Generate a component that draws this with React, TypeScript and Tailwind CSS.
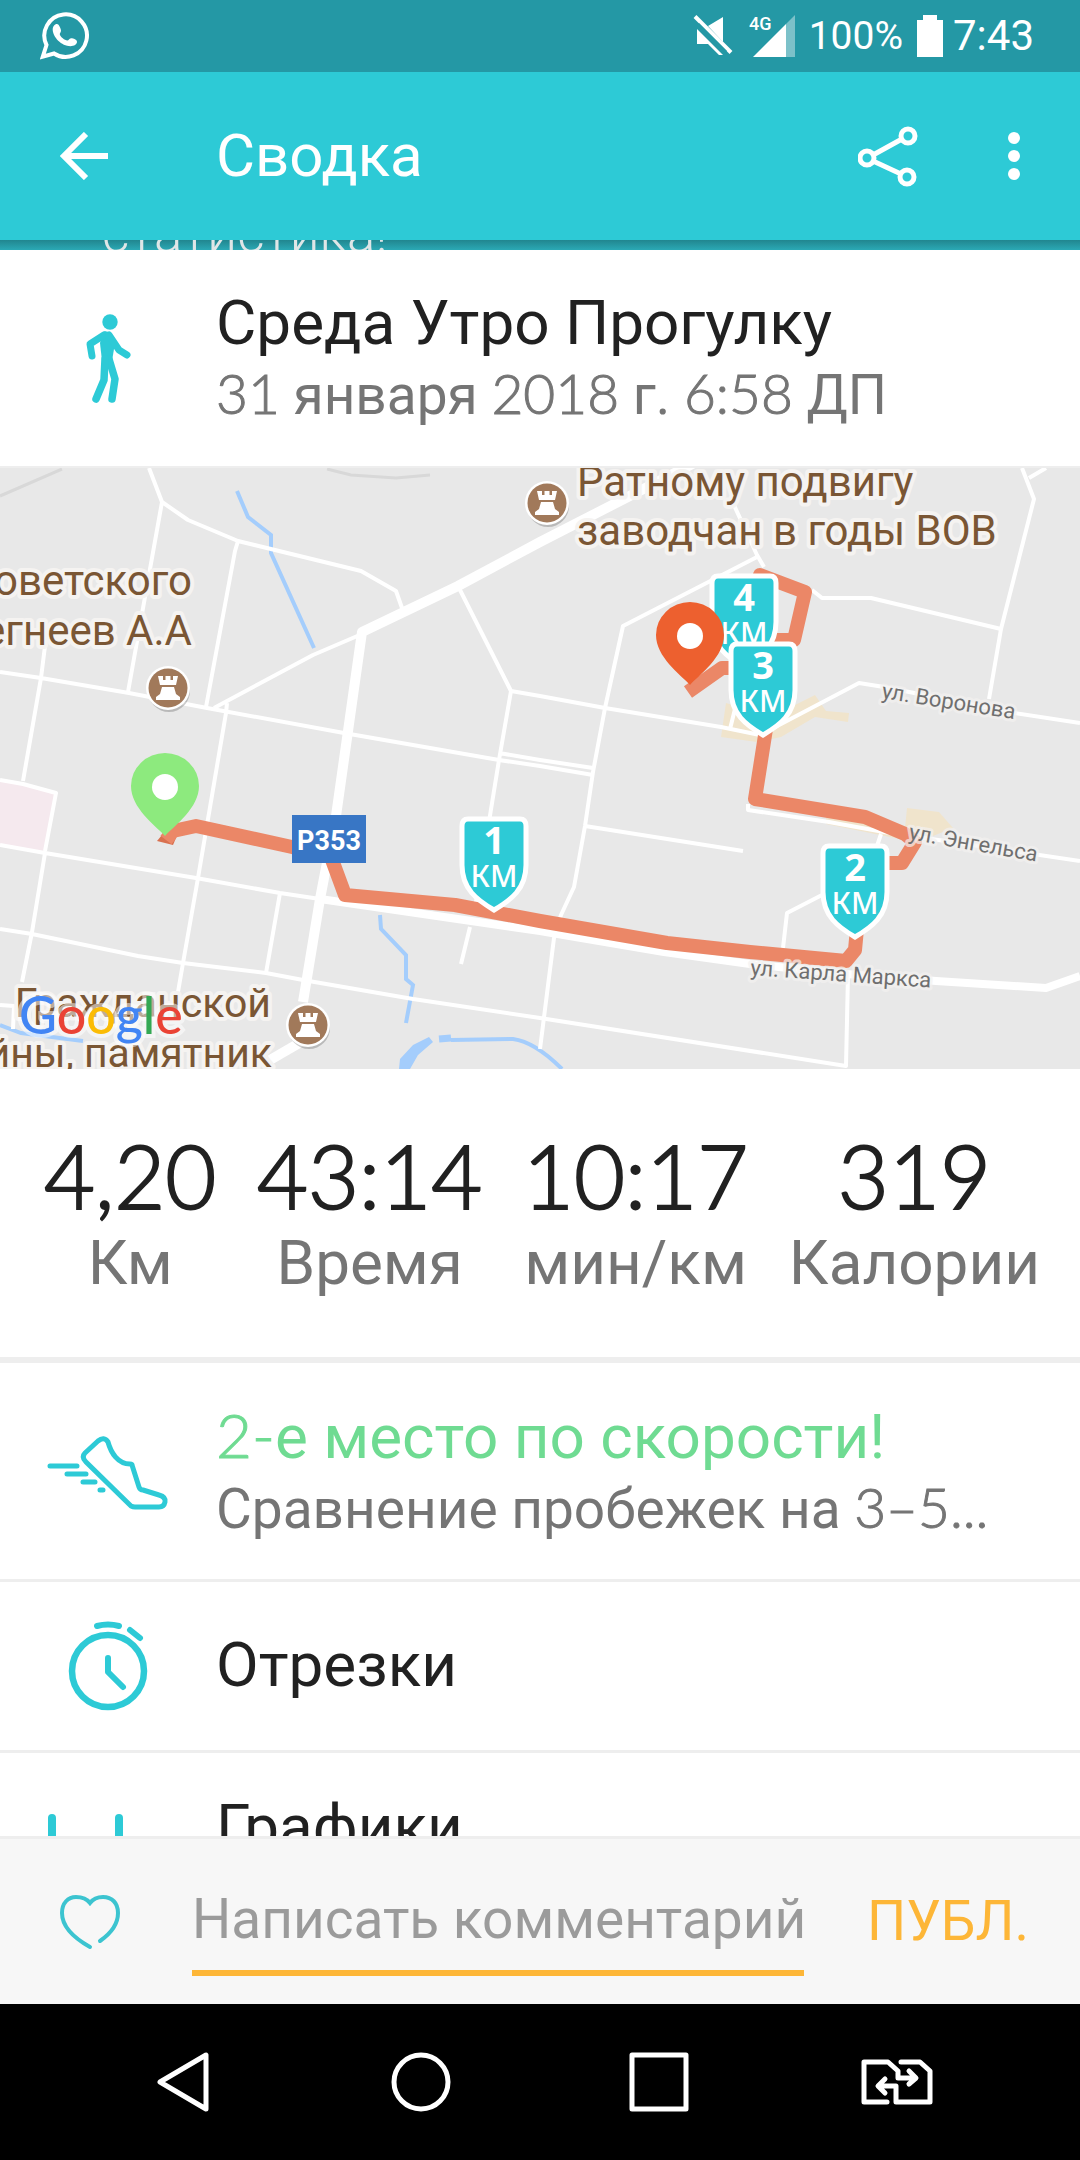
import type { ReactNode } from "react";

const TEAL = "#2dcad6";

function WhatsAppIcon() {
  return (
    <svg viewBox="0 0 50 50" className="h-[50px] w-[50px]" fill="none" aria-hidden="true">
      <path d="M6.500 34A21.300 21.300 0 1 1 14 42.500L2.800 45.600Z" stroke="#fff" strokeWidth="4" strokeLinejoin="miter" />
      <path
        d="M12.700 18.500C12.700 15.500 14.500 13 17 13C18.600 13 20.600 16.500 21 19.500C21 21.400 19.600 22.200 19.800 23.400C20.600 26 24.500 29 27.400 29.600C28.800 29.600 29 27.400 31 27.200C33.600 27.200 37 28.600 37 30.800C37 33.400 34 35.200 30.500 35.200C21.500 35.200 12.700 26 12.700 18.500Z"
        fill="#fff"
      />
    </svg>
  );
}

function MuteIcon() {
  return (
    <svg viewBox="0 0 40 44" className="h-11 w-10" aria-hidden="true">
      <path d="M15 12L30 3V28ZM4 15L30 41H26L15 30H4Z" fill="#fff" />
      <path d="M2 2.500L38 38.500" stroke="#fff" strokeWidth="4" />
      <path d="M5 10L33 38" stroke="#2498a5" strokeWidth="3" />
    </svg>
  );
}

function SignalIcon() {
  return (
    <svg viewBox="0 0 48 44" className="h-11 w-12" aria-hidden="true">
      <path d="M46 1V43H37V10Z" fill="#7cc1c9" />
      <path d="M4 43L37 10V43Z" fill="#fff" />
      <text x="0" y="16" fontSize="18" fontWeight="500" fill="#fff" fontFamily="Roboto, sans-serif">
        4G
      </text>
    </svg>
  );
}

function BatteryIcon() {
  return (
    <svg viewBox="0 0 26 42" className="h-[42px] w-[26px]" aria-hidden="true">
      <path d="M6 0H20V5H26V42H0V5H6Z" fill="#fff" />
    </svg>
  );
}

function WalkIcon() {
  return (
    <svg viewBox="-1 -1 48 92" className="h-[92px] w-12" fill="none" stroke={TEAL} strokeLinecap="round" strokeLinejoin="round" aria-hidden="true">
      <circle cx="25" cy="9" r="7.700" fill={TEAL} stroke="none" />
      <path d="M18 19Q22 17 26 21L30 30L27 48L17 48L15 30Z" fill={TEAL} stroke="none" />
      <path d="M19 22L5 31L7 43" strokeWidth="7" />
      <path d="M24 22L34 37L42 42" strokeWidth="7" />
      <path d="M24 46L30 66L27 86" strokeWidth="7.500" />
      <path d="M20 46L19 67L11 86" strokeWidth="7.500" />
    </svg>
  );
}

function ShoeIcon() {
  return (
    <svg viewBox="0 -5 122 81" className="h-[81px] w-[122px]" fill="none" stroke={TEAL} strokeWidth="5" strokeLinecap="round" strokeLinejoin="round" aria-hidden="true">
      <path d="M3 30H30M20 38H39M36 46H48M53 54H56" />
      <path d="M84 70L39 26Q34 21 38 17L51 5Q57 0 61 6C64 17 71 28 83 28C84 28 85 28 85 29L92 51Q93 54 96 54L112 59Q119 61 118 66Q117 71 112 71H88Q86 71 84 70Z" />
    </svg>
  );
}

function StopwatchIcon() {
  return (
    <svg viewBox="0 0 80 92" className="h-[92px] w-20" fill="none" stroke={TEAL} strokeLinecap="round" strokeLinejoin="round" aria-hidden="true">
      <circle cx="40" cy="51" r="36" strokeWidth="6.500" />
      <path d="M29 6Q40 3 51 6M62 10L72 18" strokeWidth="6" />
      <path d="M40 38V52L55 67" strokeWidth="6" />
    </svg>
  );
}

function ChartIcon() {
  return (
    <svg viewBox="0 0 122 60" className="h-[60px] w-[122px]" fill="none" stroke={TEAL} strokeWidth="8" strokeLinecap="round" aria-hidden="true">
      <path d="M5 20V60M72 20V60M28 43V60M95 43V60" />
    </svg>
  );
}

/* Map ------------------------------------------------------------------ */

function Shield({ x, y, n }: { x: number; y: number; n: string }) {
  return (
    <g transform={`translate(${x} ${y})`}>
      <path
        d="M-26 2H26Q32 2 32 9V48C32 72 17 83 0 93C-17 83 -32 72 -32 48V9Q-32 2 -26 2Z"
        fill={TEAL}
        stroke="#fff"
        strokeWidth="5"
      />
      <text x="0" y="37" textAnchor="middle" fontSize="38" fontWeight="700" fill="#fff" fontFamily="'Noto Sans', sans-serif">
        {n}
      </text>
      <text x="0" y="70" textAnchor="middle" fontSize="30" fontWeight="500" fill="#fff" fontFamily="'Noto Sans', sans-serif">
        КМ
      </text>
    </g>
  );
}

function Pin({ x, y, color }: { x: number; y: number; color: string }) {
  return (
    <g transform={`translate(${x} ${y})`}>
      <path d="M0 0C-10 -11 -34 -28 -34 -50A34 33 0 0 1 34 -50C34 -28 10 -11 0 0Z" fill={color} />
      <circle cx="0" cy="-49" r="13" fill="#fff" />
    </g>
  );
}

function Monument({ x, y }: { x: number; y: number }) {
  return (
    <g transform={`translate(${x} ${y})`}>
      <circle cx="1" cy="3" r="21" fill="#000" opacity="0.200" />
      <circle r="22" fill="#fff" />
      <circle r="19.500" fill="#a1795a" />
      <path d="M-10 -12H-5V-8H-2.500V-12H2.500V-8H5V-12H10L8 -3H-8ZM-6 -1H6L8 6L12 9V12H-12V9L-8 6Z" fill="#fff" />
    </g>
  );
}

const poiLabels = [
  { x: 192, y: 127, size: 42, anchor: "end", text: "Советского" },
  { x: 192, y: 177, size: 42, anchor: "end", text: "Дегнеев А.А" },
  { x: 271, y: 549, size: 41, anchor: "end", text: "Гражданской" },
  { x: 272, y: 599, size: 41, anchor: "end", text: "Войны, памятник" },
  { x: 577, y: 28, size: 42, anchor: "start", text: "Ратному подвигу" },
  { x: 577, y: 77, size: 42, anchor: "start", text: "заводчан в годы ВОВ" },
] as const;

const streetLabels = [
  { x: 881, y: 230, angle: 9, text: "ул. Воронова" },
  { x: 908, y: 371, angle: 10, text: "ул. Энгельса" },
  { x: 750, y: 507, angle: 4, text: "ул. Карла Маркса" },
];

const logoLetters = [
  ["G", "#4285f4"],
  ["o", "#ea4335"],
  ["o", "#fbbc05"],
  ["g", "#4285f4"],
  ["l", "#34a853"],
  ["e", "#ea4335"],
];

function RouteMap() {
  return (
    <svg viewBox="0 0 1080 601" className="block w-full bg-[#e8e8e8]" role="img" aria-label="Маршрут прогулки" fontFamily="Roboto, sans-serif">
      <path d="M0 312L23 316L56 325L45 383L0 377Z" fill="#f5e9ee" />
      <path d="M726 235L721 269L757 274L781 269L815 249L848 254L849 245L826 243L815 227L795 237L760 245ZM907 340L939 344L953 360L933 368L905 360ZM826 348L900 356L905 372L826 356Z" fill="#f0e4cc" />
      <g fill="none" stroke="#d8d8d8" strokeWidth="3">
        <path d="M0 28L62 1M327 1L351 7L396 10L430 7" />
      </g>
      <g fill="none" stroke="#a4cdfc" strokeWidth="4">
        <path d="M237 23L248 49L271 67V85L314 180M380 447L381 461L406 487V511L413 517L406 555M451 572L513 571Q535 574 562 601M0 557L21 565L83 573" />
        <path d="M439 571L451 570" strokeWidth="7" />
      </g>
      <path d="M399 601L400 591L413 577L429 569L433 574L418 587L410 601Z" fill="#a4cdfc" />
      <g fill="none" stroke="#fff" strokeWidth="4" strokeLinejoin="round">
        <path d="M149 0L162 34L188 52L238 73L361 103L396 123L402 140M162 34L128 224M238 73L235 83L206 239" />
        <path d="M0 204L41 210L129 225L207 240L344 265L499 292L540 298L593 307M45 178L41 210L23 313M0 312L23 316L56 325L45 383" />
        <path d="M0 377L45 385L196 410L280 425L320 431M45 385L32 464L22 514M0 461L32 466L138 488L183 495L266 505L303 512L413 531L540 550L846 598L848 506" />
        <path d="M227 235L226 245L198 410L183 495L178 524M280 425L266 505M362 166L313 187L214 240M458 118L511 223L540 228L605 240L721 259L760 267" />
        <path d="M511 223L499 292L475 440M470 459L461 496M499 285L540 292L593 300M0 537L14 538L13 561" />
        <path d="M1022 0L1034 31L1001 161L989 231M1029 10L1046 0M733 35L757 87L764 99M757 89L623 158L605 240L593 304L585 358L574 419L561 447L554 470L540 581" />
        <path d="M812 122L822 130H871L1001 161M760 267L859 215L884 219L1015 245L1080 255M736 237L730 261M585 358L743 383M748 336V342L829 354L884 364L1080 393M881 366L877 378M822 427L787 445L783 480" />
      </g>
      <g fill="none" stroke="#fff" strokeLinejoin="round">
        <path d="M700 -8L540 74L458 118L362 164L336 348L320 431L303 534" strokeWidth="10" />
        <path d="M308 570L270 592" strokeWidth="10" />
        <path d="M320 431L540 463L664 484L750 496L846 506L936 513L1046 520L1080 508" strokeWidth="8" />
      </g>
      <path d="M157 373L173 377L176 370L162 367Z" fill="#d9704f" />
      <g fill="none" stroke="#eb8767" strokeWidth="14" strokeLinejoin="round">
        <path d="M166 372L173 363L196 358L292 379L331 389L345 427L455 437L540 453L667 475L750 484L846 493L855 482L858 450" />
        <path d="M880 395L902 395L915 374L905 366L865 349L755 331L766 261L785 178L794 172L805 124L760 107L750 172L795 172" />
        <path d="M760 200L722 200L688 224" />
      </g>
      <g fill="#6f6f6f" stroke="#f3f1f0" strokeOpacity="0.700" strokeWidth="6" strokeLinejoin="round" paintOrder="stroke" fontSize="22">
        {streetLabels.map((s) => (
          <text key={s.text} transform={`translate(${s.x} ${s.y}) rotate(${s.angle})`}>
            {s.text}
          </text>
        ))}
      </g>
      <g fill="#7a5634" stroke="#f5f3f1" strokeWidth="8" strokeLinejoin="round" paintOrder="stroke">
        {poiLabels.map((p) => (
          <text key={p.text} x={p.x} y={p.y} fontSize={p.size} textAnchor={p.anchor}>
            {p.text}
          </text>
        ))}
      </g>
      <Monument x={168} y={220} />
      <Monument x={308} y={557} />
      <Monument x={547} y={35} />
      <rect x="292" y="347" width="74" height="48" fill="#3876c5" />
      <text x="329" y="382" textAnchor="middle" fontSize="27" fontWeight="700" fill="#fff">
        Р353
      </text>
      <Pin x={165} y={368} color="#8dea7e" />
      <Shield x={744} y={106} n="4" />
      <Pin x={690} y={217} color="#ed602f" />
      <Shield x={763} y={174} n="3" />
      <Shield x={855} y={376} n="2" />
      <Shield x={494} y={349} n="1" />
      <text x="19" y="566" fontSize="52" fontFamily="Lato, sans-serif" fontWeight="500" stroke="#fff" strokeOpacity="0.500" strokeWidth="8" paintOrder="stroke">
        {logoLetters.map(([ch, color], i) => (
          <tspan key={i} fill={color}>
            {ch}
          </tspan>
        ))}
      </text>
    </svg>
  );
}

/* Page pieces ---------------------------------------------------------- */

function Num({ children }: { children: ReactNode }) {
  return <span className="font-[Lato,sans-serif] font-light [-webkit-text-stroke:1px_currentColor]">{children}</span>;
}

function Stat({ value, label }: { value: string; label: string }) {
  return (
    <div className="flex flex-col items-center">
      <dd className="order-first font-[Lato,sans-serif] text-[88px] leading-[88px] font-light text-[#212121] [-webkit-text-stroke:2px_currentColor]">
        {value}
      </dd>
      <dt className="mt-2 text-[62px] leading-[72px] text-[#757575]">{label}</dt>
    </div>
  );
}

function Row({ icon, className, children }: { icon: ReactNode; className: string; children: ReactNode }) {
  return (
    <button type="button" className={`flex w-full shrink-0 items-center bg-white text-left ${className}`}>
      <span className="flex w-[216px] shrink-0 justify-center">{icon}</span>
      <span className="min-w-0 flex-1 pr-16 pb-0.5">{children}</span>
    </button>
  );
}

export default function App() {
  return (
    <div className="flex h-screen flex-col overflow-hidden bg-white font-[Roboto,sans-serif] text-[#212121]">
      <div className="flex h-[72px] shrink-0 items-center justify-between bg-[#2498a5] pr-[46px] pl-10 text-white">
        <WhatsAppIcon />
        <div className="flex items-center">
          <MuteIcon />
          <span className="ml-4">
            <SignalIcon />
          </span>
          <span className="ml-3 text-[39px] leading-[48px]">100%</span>
          <span className="mr-2.5 ml-3.5">
            <BatteryIcon />
          </span>
          <span className="text-[42px] leading-[48px]">7:43</span>
        </div>
      </div>

      <header className="flex h-[168px] shrink-0 items-center bg-[#2dcad6] text-white">
        <button type="button" aria-label="Назад" className="flex h-full w-[168px] items-center justify-center">
          <svg viewBox="0 0 50 48" className="h-12 w-[50px]" fill="none" stroke="#fff" strokeWidth="6">
            <path d="M49 24H5M27 2L5 24L27 46" />
          </svg>
        </button>
        <h1 className="ml-12 flex-1 text-[60px] leading-[72px]">Сводка</h1>
        <button type="button" aria-label="Поделиться" className="flex h-full w-[120px] items-center justify-center">
          <svg viewBox="0 0 60 62" className="h-[62px] w-[60px]" fill="none" stroke="#fff" strokeWidth="5">
            <circle cx="50" cy="11" r="7" />
            <circle cx="9" cy="33" r="7" />
            <circle cx="49" cy="52" r="7" />
            <path d="M15 30L44 14M15 36L43 49" />
          </svg>
        </button>
        <button type="button" aria-label="Ещё" className="flex h-full w-[132px] items-center justify-center">
          <svg viewBox="0 0 12 48" className="h-12 w-3" fill="#fff">
            <circle cx="6" cy="6" r="6" />
            <circle cx="6" cy="24" r="6" />
            <circle cx="6" cy="42" r="6" />
          </svg>
        </button>
      </header>

      <main className="flex min-h-0 flex-1 flex-col overflow-hidden">
        <div className="flex h-2.5 shrink-0 items-end overflow-hidden bg-linear-to-b from-[#21868f] to-[#2ba9b5] pl-[102px]">
          <p className="-mb-4 text-[53px] leading-[64px] font-light text-[#dfe6e7]">статистика!</p>
        </div>

        <section className="flex h-[216px] shrink-0 items-center">
          <div className="flex w-[216px] shrink-0 justify-center">
            <WalkIcon />
          </div>
          <div>
            <h2 className="text-[62px] leading-[72px]">Среда Утро Прогулку</h2>
            <p className="text-[55px] leading-[68px] text-[#757575]">
              <Num>31</Num> января <Num>2018</Num> г. <Num>6:58</Num> ДП
            </p>
          </div>
        </section>

        <div className="shrink-0 border-t-2 border-[#eeeeee]">
          <RouteMap />
        </div>

        <dl className="flex shrink-0 justify-between pt-[62px] pr-10 pb-[58px] pl-11">
          <Stat value="4,20" label="Км" />
          <Stat value="43:14" label="Время" />
          <Stat value="10:17" label="мин/км" />
          <Stat value="319" label="Калории" />
        </dl>

        <Row icon={<ShoeIcon />} className="h-[222px] border-t-[6px] border-[#eeeeee]">
          <span className="block text-[62px] leading-[72px] text-[#6fdb92]">
            <Num>2-</Num>е место по скорости!
          </span>
          <span className="block truncate text-[55px] leading-[68px] text-[#757575]">
            Сравнение пробежек на <Num>3–5...</Num>
          </span>
        </Row>
        <Row icon={<StopwatchIcon />} className="h-[171px] border-t-[3px] border-[#eeeeee]">
          <span className="block text-[62px] leading-[72px]">Отрезки</span>
        </Row>
        <Row icon={<ChartIcon />} className="h-[153px] border-t-[3px] border-[#eeeeee]">
          <span className="block text-[62px] leading-[72px]">Графики</span>
        </Row>
      </main>

      <form className="flex h-[168px] shrink-0 items-center border-t-[3px] border-[#eeeeee] bg-[#f7f7f7]" onSubmit={(e) => e.preventDefault()}>
        <button type="button" aria-label="Нравится" className="flex h-full w-[180px] shrink-0 items-center justify-center">
          <svg viewBox="0 0 60 58" className="h-[58px] w-[60px]" fill="none" stroke="#3cc4d0" strokeWidth="4" strokeLinecap="round">
            <path d="M30 54C14 45 2 33 2 20C2 10 8 4 16 4C22 4 27 6 30 10C33 6 38 4 43 4C52 4 58 10 58 20C58 31 50 41 40 48" />
          </svg>
        </button>
        <input
          type="text"
          aria-label="Комментарий"
          placeholder="Написать комментарий"
          className="ml-3 h-[108px] min-w-0 flex-1 rounded-none border-b-[6px] border-[#fdb637] bg-transparent text-[55px] text-[#212121] outline-none placeholder:text-[#9b9b9b]"
        />
        <button type="submit" className="h-full w-[276px] shrink-0 pl-3 text-center text-[55px] text-[#fdb637]">
          ПУБЛ.
        </button>
      </form>

      <nav className="grid h-[156px] shrink-0 grid-cols-4 bg-black px-16">
        <button type="button" aria-label="Назад" className="flex items-center justify-center">
          <svg viewBox="0 0 54 60" className="h-[60px] w-[54px]" fill="none" stroke="#fff" strokeWidth="5" strokeLinejoin="round">
            <path d="M50 3V57L4 30Z" />
          </svg>
        </button>
        <button type="button" aria-label="Домой" className="flex items-center justify-center">
          <svg viewBox="0 0 60 60" className="h-[60px] w-[60px]" fill="none" stroke="#fff" strokeWidth="5">
            <circle cx="30" cy="30" r="27" />
          </svg>
        </button>
        <button type="button" aria-label="Недавние" className="flex items-center justify-center">
          <svg viewBox="0 0 60 60" className="h-[60px] w-[60px]" fill="none" stroke="#fff" strokeWidth="5" strokeLinejoin="round">
            <rect x="3" y="3" width="54" height="54" />
          </svg>
        </button>
        <button type="button" aria-label="Сменить SIM" className="flex items-center justify-center">
          <svg viewBox="0 0 74 50" className="h-[50px] w-[74px]" fill="none" stroke="#fff" strokeWidth="5" strokeLinecap="round" strokeLinejoin="round">
            <path d="M27 45H4V5H28L38 14V21H55M49 14L56 21L49 27" />
            <path d="M41 5H60L70 14V45H36V29H19M25 22L18 29L25 36" />
          </svg>
        </button>
      </nav>
    </div>
  );
}
